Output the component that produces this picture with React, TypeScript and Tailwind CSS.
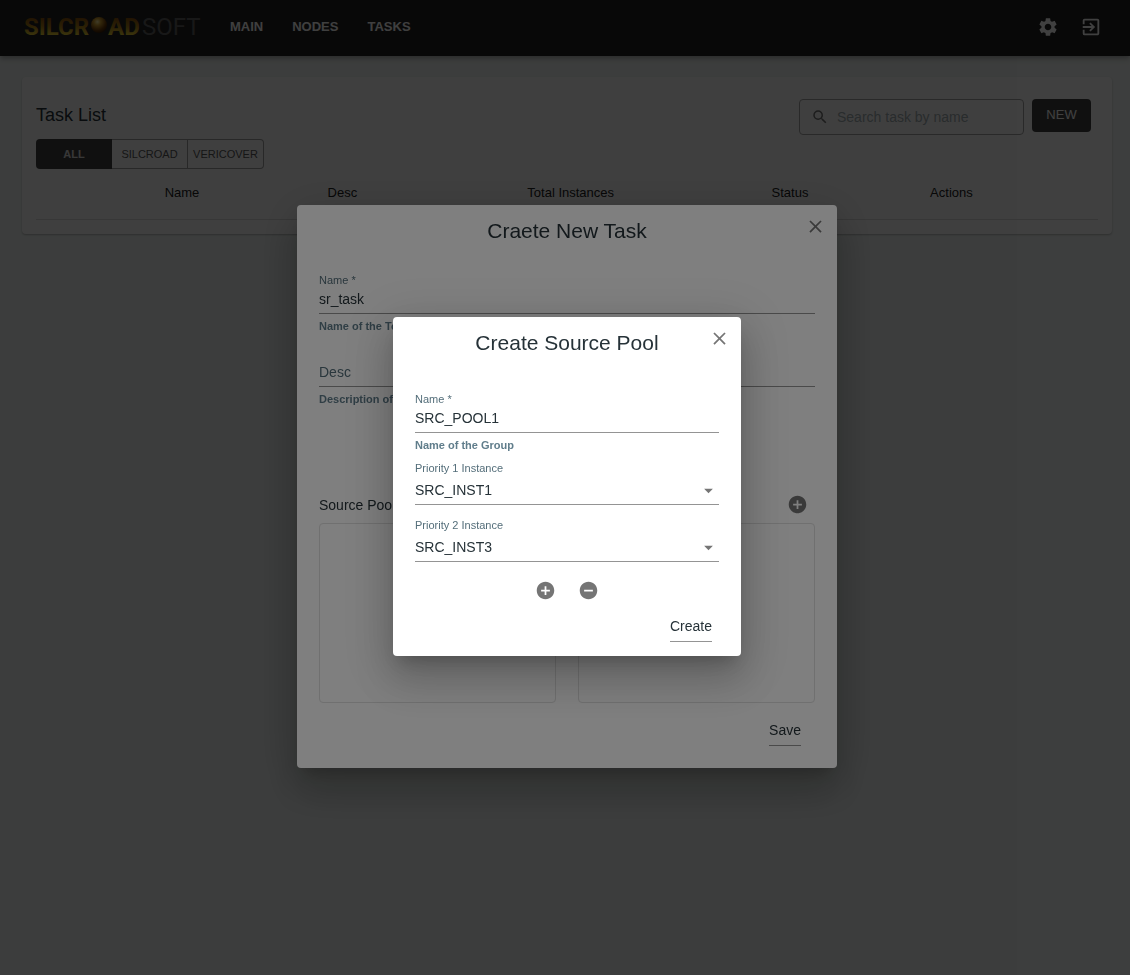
import { useState, type ReactNode } from 'react'
import {
  MdAddCircle,
  MdArrowDropDown,
  MdClose,
  MdExitToApp,
  MdRemoveCircle,
  MdSearch,
  MdSettings,
} from 'react-icons/md'

const INSTANCES = ['SRC_INST1', 'SRC_INST2', 'SRC_INST3']

function Logo() {
  return (
    <svg
      viewBox="0 0 178 26"
      className="h-[26px] w-[178px] font-[Roboto,sans-serif]"
      role="img"
      aria-label="Silcroad Soft"
    >
      <defs>
        <linearGradient id="gold" x1="0" y1="2" x2="0" y2="22" gradientUnits="userSpaceOnUse">
          <stop offset="0" stopColor="#804408" />
          <stop offset="0.55" stopColor="#b08418" />
          <stop offset="1" stopColor="#f0d838" />
        </linearGradient>
        <radialGradient id="ball" cx="0.4" cy="0.3" r="0.7">
          <stop offset="0" stopColor="#fff2a8" />
          <stop offset="0.3" stopColor="#d0a030" />
          <stop offset="0.75" stopColor="#6b3c08" />
          <stop offset="1" stopColor="#3a1c04" />
        </radialGradient>
      </defs>
      <text x="0" y="21" fontSize="24" fontWeight="700" fill="url(#gold)">SILCR</text>
      <circle cx="75" cy="11" r="8" fill="url(#ball)" />
      <text x="84" y="21" fontSize="24" fontWeight="700" fill="url(#gold)">AD</text>
      <text x="118" y="21" fontSize="24" fill="#606060">SOFT</text>
    </svg>
  )
}

function Header() {
  return (
    <header className="relative flex h-14 items-center bg-[#212121] pr-7 pb-0.5 pl-6 text-white shadow-[0_2px_4px_-1px_rgba(0,0,0,0.2),0_4px_5px_0_rgba(0,0,0,0.14)]">
      <Logo />
      <nav className="ml-7 flex gap-[29px] text-[13px] leading-5 font-bold">
        <a href="#main">MAIN</a>
        <a href="#nodes">NODES</a>
        <a href="#tasks">TASKS</a>
      </nav>
      <div className="ml-auto flex gap-[21px]">
        <button type="button" aria-label="Settings">
          <MdSettings size={22} />
        </button>
        <button type="button" aria-label="Log out">
          <MdExitToApp size={22} />
        </button>
      </div>
    </header>
  )
}

function TaskList() {
  return (
    <section className="rounded bg-white px-3.5 pt-[22px] pb-3.5 shadow-[0_1px_2px_rgba(0,0,0,0.25)]">
      <div className="flex items-start justify-between">
        <div className="pt-1">
          <h1 className="text-lg leading-6">Task List</h1>
          <div className="mt-3 grid h-[30px] w-[228px] grid-cols-3 text-[11px] text-[#585858]">
            <button type="button" className="rounded-l bg-[#424242] font-bold text-[#e0e0e0]">
              ALL
            </button>
            <button type="button" className="border-y border-r border-[#a0a0a0]">
              SILCROAD
            </button>
            <button type="button" className="rounded-r border-y border-r border-[#a0a0a0]">
              VERICOVER
            </button>
          </div>
        </div>
        <div className="mr-[7px] flex items-start gap-2">
          <label className="flex h-9 w-[225px] items-center gap-2 rounded border border-[#a4a4a4] pl-[11px]">
            <MdSearch size={18} className="shrink-0 text-[#757575]" />
            <input
              type="search"
              aria-label="Search task by name"
              placeholder="Search task by name"
              className="min-w-0 flex-1 bg-transparent text-sm outline-none placeholder:text-[#a4b0b4]"
            />
          </label>
          <button type="button" className="h-[33px] w-[59px] rounded bg-[#424242] pb-0.5 text-[13px] text-white">
            NEW
          </button>
        </div>
      </div>
      <table className="w-full table-fixed border-b border-[#dcdcdc] text-[13px] leading-5 text-[#212121]">
        <colgroup>
          <col className="w-[6.2%]" />
          <col className="w-[15.1%]" />
          <col className="w-[15.1%]" />
          <col className="w-[27.9%]" />
          <col className="w-[13.4%]" />
          <col className="w-[17%]" />
          <col className="w-[5.3%]" />
        </colgroup>
        <thead>
          <tr>
            <td />
            <th className="pt-3.5 pb-4 font-normal">Name</th>
            <th className="pt-3.5 pb-4 font-normal">Desc</th>
            <th className="pt-3.5 pb-4 font-normal">Total Instances</th>
            <th className="pt-3.5 pb-4 font-normal">Status</th>
            <th className="pt-3.5 pb-4 font-normal">Actions</th>
            <td />
          </tr>
        </thead>
      </table>
    </section>
  )
}

function Dialog({ title, width, children }: { title: string; width: string; children: ReactNode }) {
  return (
    <div className="fixed inset-0 flex items-center justify-center bg-black/50 pb-0.5 pl-1">
      <div
        role="dialog"
        aria-label={title}
        className={`${width} rounded bg-white shadow-[0_11px_15px_-7px_rgba(0,0,0,0.2),0_24px_38px_3px_rgba(0,0,0,0.14),0_9px_46px_8px_rgba(0,0,0,0.12)]`}
      >
        <div className="grid grid-cols-[1fr_auto_1fr] items-start px-[11px] pt-[11px]">
          <h2 className="col-start-2 text-[21px] leading-[30px]">{title}</h2>
          <button type="button" aria-label="Close" className="justify-self-end text-[#757575]">
            <MdClose size={21} />
          </button>
        </div>
        <div className="px-[22px]">{children}</div>
      </div>
    </div>
  )
}

type FieldProps = { id: string; label?: string; placeholder?: string; value?: string; helper: string }

function TextField({ id, label, placeholder, value = '', helper }: FieldProps) {
  const [text, setText] = useState(value)
  return (
    <div className="flex flex-col">
      {label && (
        <label htmlFor={id} className="text-[11px] leading-4 text-[#546e7a]">
          {label} *
        </label>
      )}
      <input
        id={id}
        aria-label={label ?? placeholder}
        placeholder={placeholder}
        value={text}
        onChange={(e) => setText(e.target.value)}
        className="h-[26px] border-b border-[#949494] pb-[3px] text-sm outline-none placeholder:text-[#546e7a]"
      />
      <p className="mt-1 text-[11px] leading-4 font-bold text-[#607d8b]">{helper}</p>
    </div>
  )
}

function SelectField({ id, label, value }: { id: string; label: string; value: string }) {
  return (
    <div className="flex flex-col">
      <label htmlFor={id} className="text-[11px] leading-4 text-[#546e7a]">
        {label}
      </label>
      <div className="relative flex h-[29px] items-center border-b border-[#949494]">
        <select id={id} defaultValue={value} className="h-full w-full appearance-none bg-transparent text-sm outline-none">
          {INSTANCES.map((name) => (
            <option key={name}>{name}</option>
          ))}
        </select>
        <MdArrowDropDown size={21} className="pointer-events-none absolute right-0 text-[#757575]" />
      </div>
    </div>
  )
}

function Pool({ title }: { title: string }) {
  return (
    <section>
      <div className="flex h-[21px] items-center justify-between pr-[7px]">
        <h3 className="text-sm">{title}</h3>
        <button type="button" aria-label={`Add ${title}`} className="text-[#757575]">
          <MdAddCircle size={21} />
        </button>
      </div>
      <div className="mt-2 h-[180px] rounded border border-[#e0e0e0]" />
    </section>
  )
}

export default function App() {
  return (
    <div className="min-h-screen bg-[#f2f7f5] font-['Liberation_Sans',Arial,sans-serif] text-[#263238]">
      <Header />
      <main className="pt-[21px] pr-[18px] pl-[22px]">
        <TaskList />
      </main>

      <Dialog title="Craete New Task" width="w-[540px]">
        <div className="pt-[26px]">
          <TextField id="task-name" label="Name" value="sr_task" helper="Name of the Topology" />
        </div>
        <div className="mt-[27px]">
          <TextField id="task-desc" placeholder="Desc" helper="Description of" />
        </div>
        <div className="mt-[87px] grid grid-cols-2 gap-[22px]">
          <Pool title="Source Pool" />
          <Pool title="Target Pool" />
        </div>
        <div className="mt-[17px] flex justify-end pr-3.5 pb-[22px]">
          <button type="button" className="border-b border-[#949494] pb-[5px] text-sm leading-5">
            Save
          </button>
        </div>
      </Dialog>

      <Dialog title="Create Source Pool" width="w-[348px]">
        <div className="pt-[33px]">
          <TextField id="pool-name" label="Name" value="SRC_POOL1" helper="Name of the Group" />
        </div>
        <div className="mt-[7px] flex flex-col gap-3">
          <SelectField id="priority-1" label="Priority 1 Instance" value="SRC_INST1" />
          <SelectField id="priority-2" label="Priority 2 Instance" value="SRC_INST3" />
        </div>
        <div className="mt-[18px] flex justify-center gap-[22px] text-[#757575]">
          <button type="button" aria-label="Add instance">
            <MdAddCircle size={21} />
          </button>
          <button type="button" aria-label="Remove instance">
            <MdRemoveCircle size={21} />
          </button>
        </div>
        <div className="mt-[15px] flex justify-end pr-[7px] pb-3.5">
          <button type="button" className="border-b border-[#949494] pb-[5px] text-sm leading-5">
            Create
          </button>
        </div>
      </Dialog>
    </div>
  )
}
